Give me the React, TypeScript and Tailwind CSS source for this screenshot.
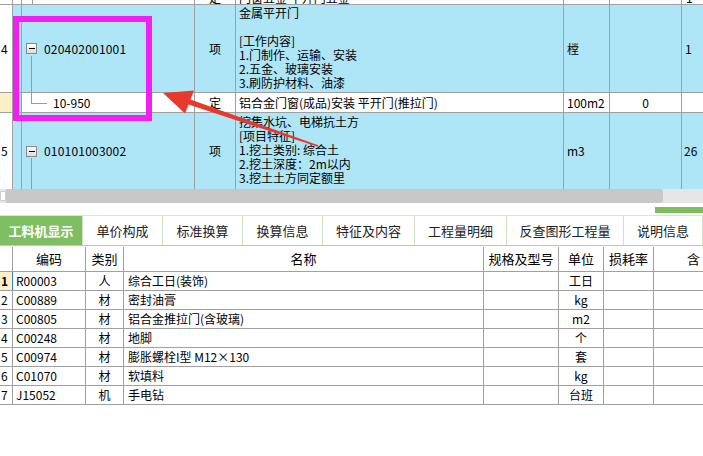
import React from 'react';

const BLUE = 'bg-[#aee6f8]';
const topCols = 'grid grid-cols-[13px_9px_173px_41px_328px_46px_72px_1fr]';
const lowCols = 'grid grid-cols-[13px_73px_38px_360px_75px_45px_50px_1fr]';

function MinusBox() {
  return (
    <span className="relative inline-flex w-[11px] h-[11px] border border-[#8a8a8a] bg-gradient-to-b from-white to-[#dcdcdc] items-center justify-center shrink-0">
      <span className="w-[6px] h-[1px] bg-black" />
    </span>
  );
}

const materials = [
  { n: '1', code: 'R00003', type: '人', name: '综合工日(装饰)', unit: '工日' },
  { n: '2', code: 'C00889', type: '材', name: '密封油膏', unit: 'kg' },
  { n: '3', code: 'C00805', type: '材', name: '铝合金推拉门(含玻璃)', unit: 'm2' },
  { n: '4', code: 'C00248', type: '材', name: '地脚', unit: '个' },
  { n: '5', code: 'C00974', type: '材', name: '膨胀螺栓I型 M12×130', unit: '套' },
  { n: '6', code: 'C01070', type: '材', name: '软填料', unit: 'kg' },
  { n: '7', code: 'J15052', type: '机', name: '手电钻', unit: '台班' },
];

const tabs = [
  { label: '工料机显示', w: 'w-[83px]', active: true },
  { label: '单价构成', w: 'w-[80px]' },
  { label: '标准换算', w: 'w-[80px]' },
  { label: '换算信息', w: 'w-[80px]' },
  { label: '特征及内容', w: 'w-[92px]' },
  { label: '工程量明细', w: 'w-[92px]' },
  { label: '反查图形工程量', w: 'w-[117px]' },
  { label: '说明信息', w: 'flex-1' },
];

export default function App() {
  const cell = 'border-r border-[#a0a0a0]';
  return (
    <div className="relative w-[703px] h-[456px] overflow-hidden bg-white text-black text-[12px] font-['Noto_Sans_CJK_SC','Liberation_Sans',sans-serif]">
      {/* 上部清单表格 */}
      <div className="h-[189px] flex flex-col">
        {/* partial top row */}
        <div className={`${topCols} h-[5px] border-b border-[#a0a0a0] overflow-hidden leading-[12px]`}>
          <div className={cell} />
          <div className={cell} />
          <div className={`${cell} relative`}>
            <div className="absolute left-[10px] top-0 w-[1px] h-full bg-[#9a9a9a]" />
          </div>
          <div className={`${cell} text-center -mt-[8px]`}>定</div>
          <div className={`${cell} pl-[3px] -mt-[8px]`}>门窗五金 平开门五金</div>
          <div className={cell} />
          <div className={cell} />
          <div className="pl-[4px] -mt-[8px]">1</div>
        </div>

        {/* row 4 */}
        <div className={`${topCols} h-[88px] border-b border-[#a0a0a0] ${BLUE}`}>
          <div className={`${cell} bg-white flex items-center pl-[1px]`}>4</div>
          <div className={cell} />
          <div className={`${cell} relative flex items-center pl-[4px] gap-[7px]`}>
            <MinusBox />
            <span className="tracking-[0.2px]">020402001001</span>
            <div className="absolute left-[9px] top-[51px] w-[1px] h-[37px] bg-[#9a9a9a]" />
          </div>
          <div className={`${cell} flex items-center justify-center`}>项</div>
          <div className={`${cell} pl-[3px] pt-[1px] leading-[14px] whitespace-pre`}>
            {'金属平开门\n\n[工作内容]\n1.门制作、运输、安装\n2.五金、玻璃安装\n3.刷防护材料、油漆'}
          </div>
          <div className={`${cell} flex items-center pl-[3px]`}>樘</div>
          <div className={cell} />
          <div className="flex items-center pl-[3px]">1</div>
        </div>

        {/* row 10-950 */}
        <div className={`${topCols} h-[20px] border-b border-[#a0a0a0] bg-white`}>
          <div className={`${cell} bg-[#fdf0c8]`} />
          <div className={`${cell} bg-[#9fdcec]`} />
          <div className={`${cell} relative flex items-center pl-[31px]`}>
            <div className="absolute left-[9px] top-0 w-[1px] h-[10px] bg-[#9a9a9a]" />
            <div className="absolute left-[9px] top-[10px] w-[16px] h-[1px] bg-[#9a9a9a]" />
            10-950
          </div>
          <div className={`${cell} flex items-center justify-center`}>定</div>
          <div className={`${cell} flex items-center pl-[3px] whitespace-nowrap overflow-hidden`}>铝合金门窗(成品)安装 平开门(推拉门)</div>
          <div className={`${cell} flex items-center pl-[3px]`}>100m2</div>
          <div className={`${cell} flex items-center justify-center`}>0</div>
          <div />
        </div>

        {/* row 5 */}
        <div className={`${topCols} flex-1 ${BLUE}`}>
          <div className={`${cell} bg-white flex items-center pl-[1px]`}>5</div>
          <div className={cell} />
          <div className={`${cell} relative flex items-center pl-[4px] gap-[7px]`}>
            <MinusBox />
            <span className="tracking-[0.2px]">010101003002</span>
            <div className="absolute left-[9px] top-[45px] w-[1px] h-[31px] bg-[#9a9a9a]" />
          </div>
          <div className={`${cell} flex items-center justify-center`}>项</div>
          <div className={`${cell} pl-[3px] pt-[2px] leading-[14px] whitespace-pre overflow-hidden`}>
            {'挖集水坑、电梯抗土方\n[项目特征]\n1.挖土类别: 综合土\n2.挖土深度：2m以内\n3.挖土土方同定额里'}
          </div>
          <div className={`${cell} flex items-center pl-[3px]`}>m3</div>
          <div className={cell} />
          <div className="flex items-center pl-[2px]">26</div>
        </div>
      </div>

      {/* 横向滚动条 */}
      <div className="h-[14px] flex bg-[#e6e6e6]">
        <div className="w-[6px] my-[2px] bg-white border border-[#cfcfcf]" />
        <div className="w-[657px] bg-[#c8c8c8] rounded-r-[3px]" />
      </div>
      <div className="h-[12px] flex justify-end items-end pb-[2px]">
        <div className="w-[48px] h-[6px] bg-[#7cbd5f]" />
      </div>

      {/* 页签 */}
      <div className="h-[31px] flex border-t border-[#dbe6d2] border-b border-b-[#b9cda9] text-[13px]">
        {tabs.map((t) => (
          <div
            key={t.label}
            className={`${t.w} flex items-center justify-center border-r border-[#d2e0c6] ${t.active ? 'bg-[#7fbf62] text-white font-bold' : 'text-[#222]'}`}
          >
            {t.label}
          </div>
        ))}
      </div>

      {/* 工料机表格 */}
      <div className={`${lowCols} h-[25px] mt-[1px] border-b border-[#a0a0a0] text-[13px]`}>
        <div className={cell} />
        <div className={`${cell} flex items-center justify-center`}>编码</div>
        <div className={`${cell} flex items-center justify-center`}>类别</div>
        <div className={`${cell} flex items-center justify-center`}>名称</div>
        <div className={`${cell} flex items-center justify-center`}>规格及型号</div>
        <div className={`${cell} flex items-center justify-center`}>单位</div>
        <div className={`${cell} flex items-center justify-center`}>损耗率</div>
        <div className="flex items-center justify-end pr-[3px]">含</div>
      </div>
      {materials.map((m, i) => (
        <div key={m.n} className={`${lowCols} h-[19px] border-b border-[#a0a0a0]`}>
          <div className={`${cell} flex items-center pl-[1px] ${i === 0 ? 'bg-[#fdf0c8] font-bold border-r-[#3d7fd6]' : ''}`}>{m.n}</div>
          <div className={`${cell} flex items-center pl-[3px]`}>{m.code}</div>
          <div className={`${cell} flex items-center justify-center`}>{m.type}</div>
          <div className={`${cell} flex items-center pl-[4px]`}>{m.name}</div>
          <div className={cell} />
          <div className={`${cell} flex items-center justify-center`}>{m.unit}</div>
          <div className={cell} />
          <div />
        </div>
      ))}

      {/* 标注 */}
      <div className="absolute left-[13px] top-[16px] w-[139px] h-[105px] border-[6px] border-[#f020f0] pointer-events-none" />
      <svg className="absolute left-0 top-0 pointer-events-none" width="703" height="456">
        <polygon
          points="163,93 194,90.5 190.5,99.6 318.3,145.2 317.7,146.8 188.5,104.6 185,113.5"
          fill="#e8392c"
        />
      </svg>
    </div>
  );
}
